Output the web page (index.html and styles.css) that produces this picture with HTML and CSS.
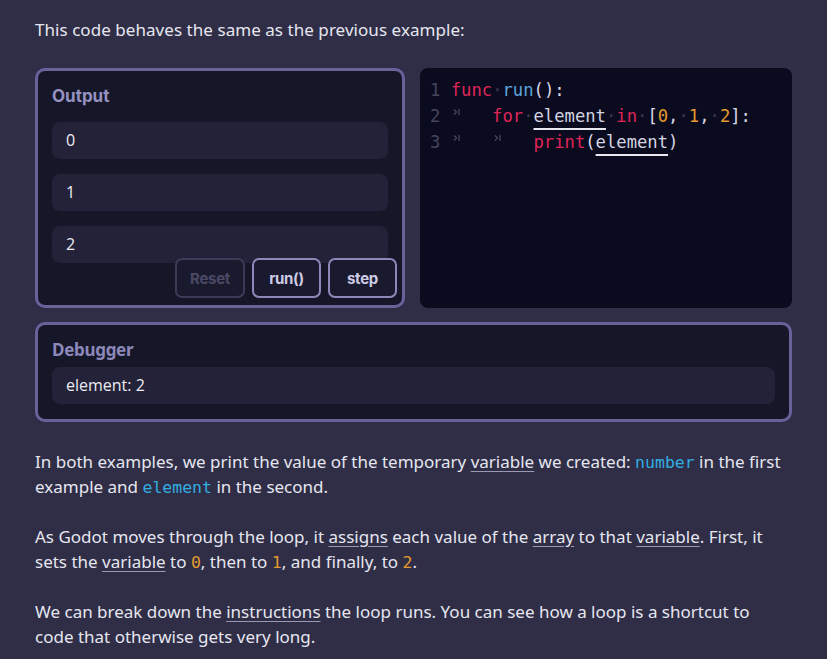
FILE: index.html
```html
<!DOCTYPE html>
<html>
<head>
<meta charset="utf-8">
<link rel="stylesheet" href="styles.css">
</head>
<body>
<main class="page">
  <p class="text lead">This code behaves the same as the previous example:</p>

  <div class="demo">
    <section class="output panel">
      <h3 class="output-title">Output</h3>
      <div class="rows">
        <div class="row">0</div>
        <div class="row">1</div>
        <div class="row">2</div>
      </div>
      <div class="buttons">
        <button class="btn btn-dim">Reset</button>
        <button class="btn">run()</button>
        <button class="btn">step</button>
      </div>
    </section>

    <pre class="code"><span class="ln">1</span> <span class="kw">func</span><span class="ws">·</span><span class="fn">run</span><span class="p">():</span>
<span class="ln">2</span> <span class="tab"><svg width="8" height="8" viewBox="0 0 8 8"><path d="M1 1.5 L3.5 4 L1 6.5 M6 1 V7" fill="none" stroke="currentColor" stroke-width="1.2"/></svg></span><span class="kw">for</span><span class="ws">·</span><span class="var">element</span><span class="ws">·</span><span class="kw">in</span><span class="ws">·</span><span class="p">[</span><span class="num">0</span><span class="p">,</span><span class="ws">·</span><span class="num">1</span><span class="p">,</span><span class="ws">·</span><span class="num">2</span><span class="p">]:</span>
<span class="ln">3</span> <span class="tab"><svg width="8" height="8" viewBox="0 0 8 8"><path d="M1 1.5 L3.5 4 L1 6.5 M6 1 V7" fill="none" stroke="currentColor" stroke-width="1.2"/></svg></span><span class="tab"><svg width="8" height="8" viewBox="0 0 8 8"><path d="M1 1.5 L3.5 4 L1 6.5 M6 1 V7" fill="none" stroke="currentColor" stroke-width="1.2"/></svg></span><span class="kw">print</span><span class="p">(</span><span class="var">element</span><span class="p">)</span></pre>
  </div>

  <section class="debugger panel">
    <h3 class="debug-title">Debugger</h3>
    <div class="row">element: 2</div>
  </section>

  <p class="text body">In both examples, we print the value of the temporary <span class="u">variable</span> we created: <code class="ic blue">number</code> in the first example and <code class="ic blue">element</code> in the second.</p>
  <p class="text body">As Godot moves through the loop, it <span class="u">assigns</span> each value of the <span class="u">array</span> to that <span class="u">variable</span>. First, it sets the <span class="u">variable</span> to <code class="ic orange">0</code>, then to <code class="ic orange">1</code>, and finally, to <code class="ic orange">2</code>.</p>
  <p class="text body">We can break down the <span class="u">instructions</span> the loop runs. You can see how a loop is a shortcut to code that otherwise gets very long.</p>
</main>
</body>
</html>
```

FILE: styles.css
```css
html, body {
  margin: 0;
  padding: 0;
  background: #2f2e46;
}

.page {
  width: 757px;
  padding: 17px 35px 0;
  font-family: "Noto Sans", "Open Sans", sans-serif;
  color: #e6e6f0;
}

.text {
  margin: 0;
  font-size: 17px;
  line-height: 25px;
}

.lead {
  letter-spacing: 0.05px;
}

.body {
  margin-top: 25px;
}

.demo {
  display: grid;
  grid-template-columns: 370px 372px;
  gap: 15px;
  margin-top: 26px;
  height: 240px;
}

.panel {
  box-sizing: border-box;
  background: #161629;
  border: 3px solid #67639a;
  border-radius: 10px;
}

.output {
  position: relative;
  height: 240px;
  padding: 15px 14px 0;
  overflow: hidden;
}

.output-title {
  margin: 0;
  font-family: "Inter", "Lato", sans-serif;
  font-weight: 700;
  font-size: 17px;
  line-height: 20px;
  color: #9692c2;
}

.rows {
  display: flex;
  flex-direction: column;
  gap: 15px;
  margin-top: 16px;
}

.row {
  height: 37px;
  box-sizing: border-box;
  padding-left: 14px;
  background: #232238;
  border-radius: 8px;
  font-family: "Open Sans", "Noto Sans", sans-serif;
  font-size: 16px;
  line-height: 37px;
  color: #ececf4;
}

.buttons {
  position: absolute;
  right: 5px;
  bottom: 7px;
  display: flex;
  gap: 7px;
}

.btn {
  box-sizing: border-box;
  height: 40px;
  width: 69px;
  background: #1a1a2e;
  border: 2px solid #8d88ba;
  border-radius: 7px;
  font-family: "Inter", "Lato", sans-serif;
  font-weight: 700;
  font-size: 15px;
  letter-spacing: -0.3px;
  color: #cfcbe6;
  padding: 0;
}

.btn-dim {
  width: 70px;
  border-color: #3c3a56;
  color: #4b4966;
}

.code {
  margin: 0;
  height: 240px;
  box-sizing: border-box;
  background: #0b0b1f;
  border-radius: 8px;
  padding: 9px 0 0 10px;
  font-family: "DejaVu Sans Mono", "Liberation Mono", monospace;
  font-size: 17.2px;
  line-height: 26px;
  color: #d4d4e4;
  white-space: pre;
}

.ln {
  color: #45465c;
}

.kw {
  color: #df2458;
}

.fn {
  color: #5ba4dc;
}

.p {
  color: #d8d8e6;
}

.num {
  color: #e39a2e;
}

.ws {
  color: #3a3b52;
}

.var {
  color: #d4d4e2;
  text-decoration: underline;
  text-decoration-color: #e8e8f0;
  text-decoration-thickness: 2px;
  text-underline-offset: 6px;
}

.tab {
  display: inline-block;
  width: 4ch;
  color: #4a4b62;
  vertical-align: baseline;
}

.tab svg {
  display: block;
  margin-left: 2px;
  position: relative;
  top: -6px;
}

.debugger {
  margin-top: 14px;
  height: 100px;
  padding: 15px 14px 0;
}

.debug-title {
  margin: 0 0 7px;
  font-family: "Noto Sans", sans-serif;
  font-weight: 700;
  font-size: 17px;
  line-height: 20px;
  letter-spacing: -0.3px;
  color: #8c88ba;
}

.debugger + .body {
  margin-top: 27px;
}

.u {
  text-decoration: underline;
  text-decoration-color: #9a99b2;
  text-underline-offset: 3px;
}

.ic {
  font-family: "DejaVu Sans Mono", "Liberation Mono", monospace;
  font-size: 16.5px;
  line-height: 1;
}

.blue {
  color: #33ade0;
}

.orange {
  color: #e39a2e;
}
```
